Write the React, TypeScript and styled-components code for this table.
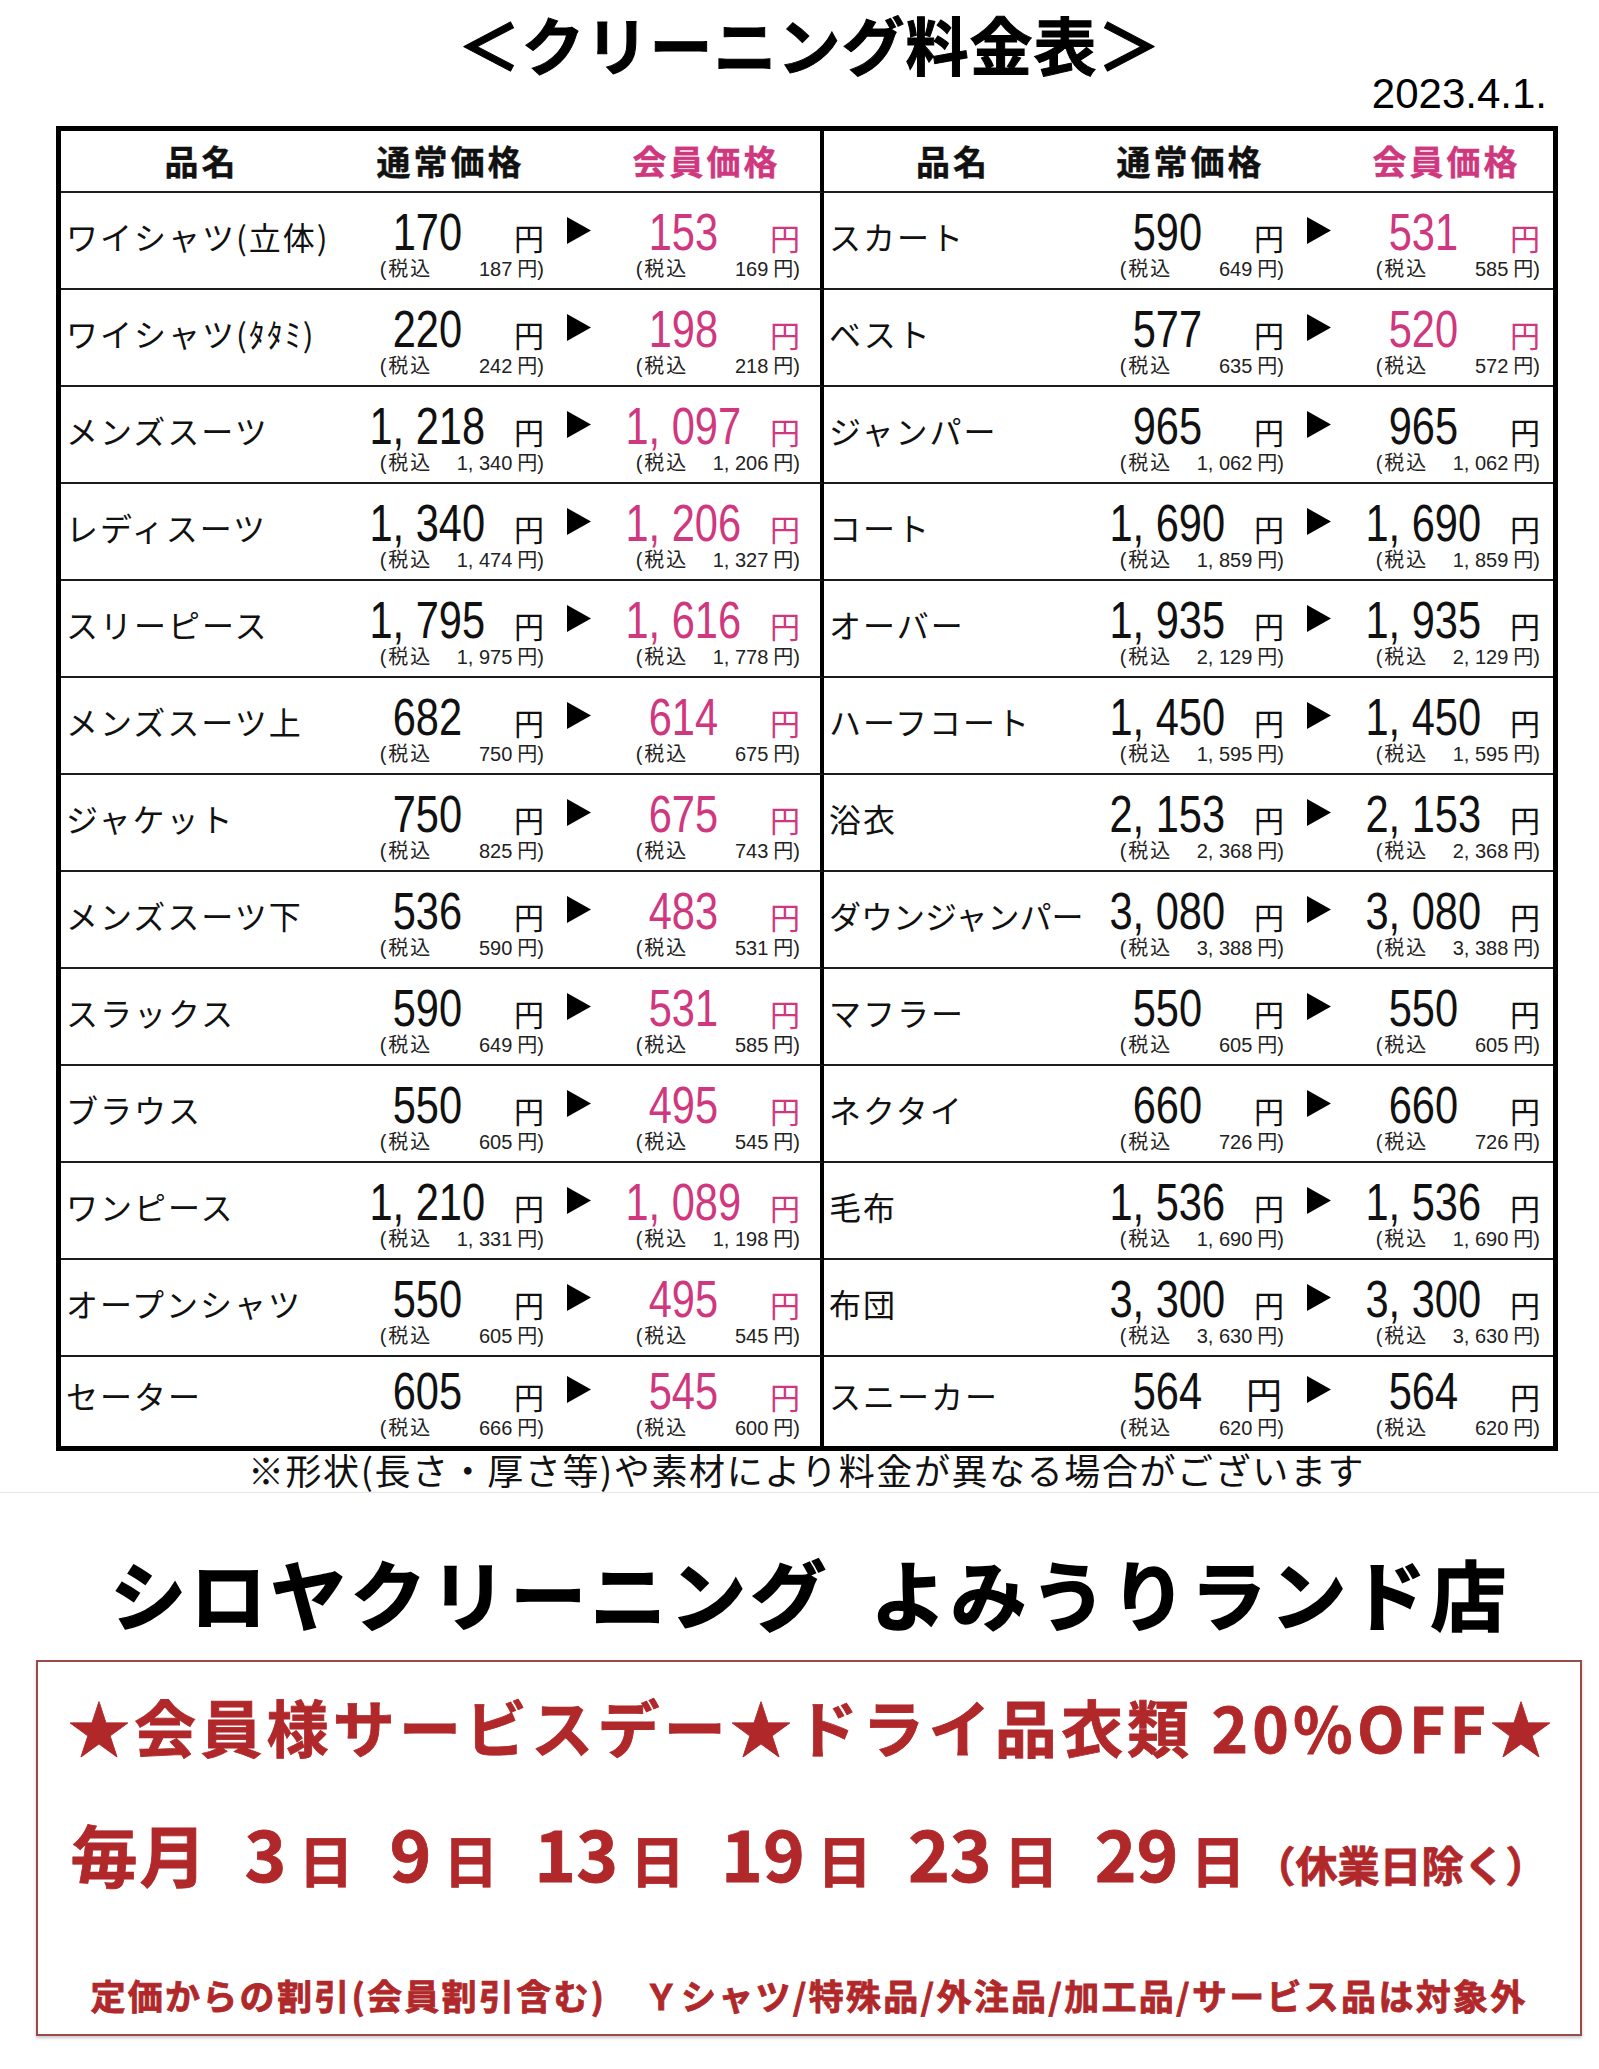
import React from "react";
import styled, { createGlobalStyle } from "styled-components";

const PINK = "#cf387e";
const RED = "#b0282a";
const JP = `"Noto Sans CJK JP", "Noto Sans", sans-serif`;
const NUM = `"Liberation Sans", Arial, "Noto Sans CJK JP", sans-serif`;

const GlobalStyle = createGlobalStyle`
  html, body { margin: 0; padding: 0; background: #ffffff; }
  body { font-family: ${JP}; color: #111; }
`;

type Item = {
  name: string;
  price: string;
  member: string;
  tax: string;
  memberTax: string;
  pink?: boolean;
  tight?: boolean;
  bigYen?: boolean;
};

const leftItems: Item[] = [
  { name: "ワイシャツ(立体)", price: "170", member: "153", tax: "187", memberTax: "169", pink: true },
  { name: "ワイシャツ(ﾀﾀﾐ)", price: "220", member: "198", tax: "242", memberTax: "218", pink: true },
  { name: "メンズスーツ", price: "1, 218", member: "1, 097", tax: "1, 340", memberTax: "1, 206", pink: true },
  { name: "レディスーツ", price: "1, 340", member: "1, 206", tax: "1, 474", memberTax: "1, 327", pink: true },
  { name: "スリーピース", price: "1, 795", member: "1, 616", tax: "1, 975", memberTax: "1, 778", pink: true },
  { name: "メンズスーツ上", price: "682", member: "614", tax: "750", memberTax: "675", pink: true },
  { name: "ジャケット", price: "750", member: "675", tax: "825", memberTax: "743", pink: true },
  { name: "メンズスーツ下", price: "536", member: "483", tax: "590", memberTax: "531", pink: true },
  { name: "スラックス", price: "590", member: "531", tax: "649", memberTax: "585", pink: true },
  { name: "ブラウス", price: "550", member: "495", tax: "605", memberTax: "545", pink: true },
  { name: "ワンピース", price: "1, 210", member: "1, 089", tax: "1, 331", memberTax: "1, 198", pink: true },
  { name: "オープンシャツ", price: "550", member: "495", tax: "605", memberTax: "545", pink: true },
  { name: "セーター", price: "605", member: "545", tax: "666", memberTax: "600", pink: true },
];

const rightItems: Item[] = [
  { name: "スカート", price: "590", member: "531", tax: "649", memberTax: "585", pink: true },
  { name: "ベスト", price: "577", member: "520", tax: "635", memberTax: "572", pink: true },
  { name: "ジャンパー", price: "965", member: "965", tax: "1, 062", memberTax: "1, 062" },
  { name: "コート", price: "1, 690", member: "1, 690", tax: "1, 859", memberTax: "1, 859" },
  { name: "オーバー", price: "1, 935", member: "1, 935", tax: "2, 129", memberTax: "2, 129" },
  { name: "ハーフコート", price: "1, 450", member: "1, 450", tax: "1, 595", memberTax: "1, 595" },
  { name: "浴衣", price: "2, 153", member: "2, 153", tax: "2, 368", memberTax: "2, 368" },
  { name: "ダウンジャンパー", price: "3, 080", member: "3, 080", tax: "3, 388", memberTax: "3, 388", tight: true },
  { name: "マフラー", price: "550", member: "550", tax: "605", memberTax: "605" },
  { name: "ネクタイ", price: "660", member: "660", tax: "726", memberTax: "726" },
  { name: "毛布", price: "1, 536", member: "1, 536", tax: "1, 690", memberTax: "1, 690" },
  { name: "布団", price: "3, 300", member: "3, 300", tax: "3, 630", memberTax: "3, 630" },
  { name: "スニーカー", price: "564", member: "564", tax: "620", memberTax: "620", bigYen: true },
];

const Page = styled.div`
  width: 1599px;
  padding-top: 12px;
  padding-bottom: 33px;
  box-sizing: border-box;
  background: #ffffff;
`;

const Title = styled.h1`
  margin: 0;
  padding-left: 20px;
  text-align: center;
  font-family: ${JP};
  font-size: 63px;
  line-height: 62px;
  font-weight: 700;
  letter-spacing: 1px;
  color: #000;
  -webkit-text-stroke: 1px #000;
`;

const DateLine = styled.div`
  text-align: right;
  padding-right: 52px;
  font-family: ${NUM};
  font-size: 42px;
  line-height: 40px;
  color: #000;
`;

const Table = styled.div`
  margin: 12px 0 0 56px;
  width: 1502px;
  box-sizing: border-box;
  border: 5px solid #000;
  display: grid;
  grid-template-columns: 763px 729px;
`;

const CellBase = styled.div<{ $side: "left" | "right" }>`
  display: grid;
  grid-template-columns: minmax(0, 1fr) 180px 27px 49px 180px 27px;
  box-sizing: border-box;
  padding-left: 5px;
  padding-right: ${(p) => (p.$side === "left" ? 20 : 13)}px;
  border-right: ${(p) => (p.$side === "left" ? "4px solid #000" : "none")};
  border-bottom: 2px solid #1c1c1c;
`;

const HeadCell = styled(CellBase)`
  height: 62px;
  align-items: center;
`;

const RowCell = styled(CellBase)<{ $last?: boolean }>`
  height: ${(p) => (p.$last ? 89 : 97)}px;
  border-bottom-width: ${(p) => (p.$last ? 0 : 2)}px;
  padding-top: ${(p) => (p.$last ? 9 : 14)}px;
  align-items: baseline;
  align-content: start;
`;

const HeadLabel = styled.div<{ $col: string; $pink?: boolean; $shift?: boolean }>`
  grid-column: ${(p) => p.$col};
  text-align: center;
  padding-left: ${(p) => (p.$shift ? 20 : 0)}px;
  font-size: 34px;
  line-height: 60px;
  font-weight: 700;
  letter-spacing: 3px;
  color: ${(p) => (p.$pink ? PINK : "#111")};
  -webkit-text-stroke: 0.4px ${(p) => (p.$pink ? PINK : "#111")};
  white-space: nowrap;
`;

const ItemName = styled.div<{ $tight?: boolean }>`
  grid-column: 1;
  grid-row: 1;
  font-size: 32px;
  line-height: 44px;
  letter-spacing: ${(p) => (p.$tight ? 0 : 2)}px;
  white-space: nowrap;
  color: #111;
`;

const Price = styled.div<{ $col: number; $pink?: boolean }>`
  grid-column: ${(p) => p.$col};
  grid-row: 1;
  text-align: center;
  font-family: ${NUM};
  font-size: 52px;
  line-height: 50px;
  white-space: nowrap;
  color: ${(p) => (p.$pink ? PINK : "#111")};
`;

const Digits = styled.span`
  display: inline-block;
  transform: scaleX(0.8);
`;

const Yen = styled.div<{ $col: number; $pink?: boolean; $big?: boolean }>`
  grid-column: ${(p) => p.$col};
  grid-row: 1;
  justify-self: end;
  font-size: ${(p) => (p.$big ? 36 : 30)}px;
  line-height: 44px;
  margin-right: ${(p) => (p.$big ? 2 : 0)}px;
  color: ${(p) => (p.$pink ? PINK : "#111")};
`;

const ArrowIcon = styled.svg`
  grid-column: 4;
  grid-row: 1;
  justify-self: end;
  align-self: start;
  margin-top: 10px;
  margin-right: 2px;
  width: 24px;
  height: 27px;
`;

const Tax = styled.div<{ $col: number }>`
  grid-column: ${(p) => p.$col} / span 2;
  grid-row: 2;
  justify-self: end;
  display: flex;
  align-items: baseline;
  font-family: ${NUM};
  font-size: 20px;
  line-height: 20px;
  white-space: nowrap;
  color: #222;
`;

const TaxLabel = styled.span`
  letter-spacing: 2px;
`;

const TaxNum = styled.span`
  width: 80px;
  text-align: right;
`;

const TaxTail = styled.span`
  margin-left: 5px;
`;

const Notice = styled.p`
  margin: 0;
  padding-left: 14px;
  text-align: center;
  font-size: 36px;
  line-height: 36px;
  letter-spacing: 1.6px;
  color: #111;
  white-space: nowrap;
`;

const Separator = styled.hr`
  margin: 5px 0 0;
  border: 0;
  height: 1px;
  background: #e6e6e6;
`;

const ShopName = styled.h2`
  margin: 61px 0 0;
  padding-left: 22px;
  text-align: center;
  font-size: 76px;
  line-height: 76px;
  font-weight: 700;
  letter-spacing: 4px;
  word-spacing: 19px;
  color: #000;
  -webkit-text-stroke: 1.5px #000;
  white-space: nowrap;
`;

const PromoBox = styled.section`
  margin: 30px 0 0 36px;
  width: 1546px;
  height: 376px;
  box-sizing: border-box;
  border: 2px solid #9a4a48;
  box-shadow: 0 2px 3px rgba(0, 0, 0, 0.22);
  padding-top: 34px;
  display: flex;
  flex-direction: column;
  align-items: center;
  color: ${RED};
  font-weight: 700;
  -webkit-text-stroke: 0.8px ${RED};
`;

const PromoHeadline = styled.div`
  font-size: 62px;
  line-height: 60px;
  letter-spacing: 4.2px;
  padding-left: 6px;
  white-space: nowrap;
`;

const DaysLine = styled.div`
  margin-top: 64px;
  display: flex;
  align-items: baseline;
  white-space: nowrap;
`;

const Month = styled.span`
  font-size: 67px;
  line-height: 62px;
  letter-spacing: 2px;
`;

const DayGroup = styled.span`
  margin-left: 36px;
  display: inline-flex;
  align-items: baseline;
`;

const DayNum = styled.span`
  font-size: 71px;
  line-height: 62px;
`;

const DayUnit = styled.span`
  margin-left: 12px;
  font-size: 55px;
  line-height: 62px;
`;

const Closed = styled.span`
  margin-left: 8px;
  font-size: 42px;
  line-height: 62px;
`;

const Exclusion = styled.div`
  margin-top: 82px;
  font-size: 35px;
  line-height: 35px;
  letter-spacing: 2.3px;
  white-space: nowrap;
`;

const Arrow = () => (
  <ArrowIcon viewBox="0 0 24 27" aria-hidden="true">
    <polygon points="0,0 24,13.5 0,27" fill="#000" />
  </ArrowIcon>
);

const PriceRow = ({ item, side, last }: { item: Item; side: "left" | "right"; last: boolean }) => (
  <RowCell $side={side} $last={last}>
    <ItemName $tight={item.tight}>{item.name}</ItemName>
    <Price $col={2}>
      <Digits>{item.price}</Digits>
    </Price>
    <Yen $col={3} $big={item.bigYen}>円</Yen>
    <Arrow />
    <Price $col={5} $pink={item.pink}>
      <Digits>{item.member}</Digits>
    </Price>
    <Yen $col={6} $pink={item.pink}>円</Yen>
    <Tax $col={2}>
      <TaxLabel>(税込</TaxLabel>
      <TaxNum>{item.tax}</TaxNum>
      <TaxTail>円)</TaxTail>
    </Tax>
    <Tax $col={5}>
      <TaxLabel>(税込</TaxLabel>
      <TaxNum>{item.memberTax}</TaxNum>
      <TaxTail>円)</TaxTail>
    </Tax>
  </RowCell>
);

const Header = ({ side }: { side: "left" | "right" }) => (
  <HeadCell $side={side}>
    <HeadLabel $col="1">品名</HeadLabel>
    <HeadLabel $col="2 / span 2" $shift>
      通常価格
    </HeadLabel>
    <HeadLabel $col="5 / span 2" $shift $pink>
      会員価格
    </HeadLabel>
  </HeadCell>
);

const days = ["3", "9", "13", "19", "23", "29"];

export default function App() {
  return (
    <Page>
      <GlobalStyle />
      <Title>＜クリーニング料金表＞</Title>
      <DateLine>2023.4.1.</DateLine>
      <Table>
        <Header side="left" />
        <Header side="right" />
        {leftItems.map((item, i) => (
          <React.Fragment key={item.name}>
            <PriceRow item={item} side="left" last={i === leftItems.length - 1} />
            <PriceRow item={rightItems[i]} side="right" last={i === leftItems.length - 1} />
          </React.Fragment>
        ))}
      </Table>
      <Notice>※形状(長さ・厚さ等)や素材により料金が異なる場合がございます</Notice>
      <Separator />
      <ShopName>シロヤクリーニング よみうりランド店</ShopName>
      <PromoBox>
        <PromoHeadline>★会員様サービスデー★ドライ品衣類 20%OFF★</PromoHeadline>
        <DaysLine>
          <Month>毎月</Month>
          {days.map((d) => (
            <DayGroup key={d}>
              <DayNum>{d}</DayNum>
              <DayUnit>日</DayUnit>
            </DayGroup>
          ))}
          <Closed>（休業日除く）</Closed>
        </DaysLine>
        <Exclusion>定価からの割引(会員割引含む)　Ｙシャツ/特殊品/外注品/加工品/サービス品は対象外</Exclusion>
      </PromoBox>
    </Page>
  );
}
